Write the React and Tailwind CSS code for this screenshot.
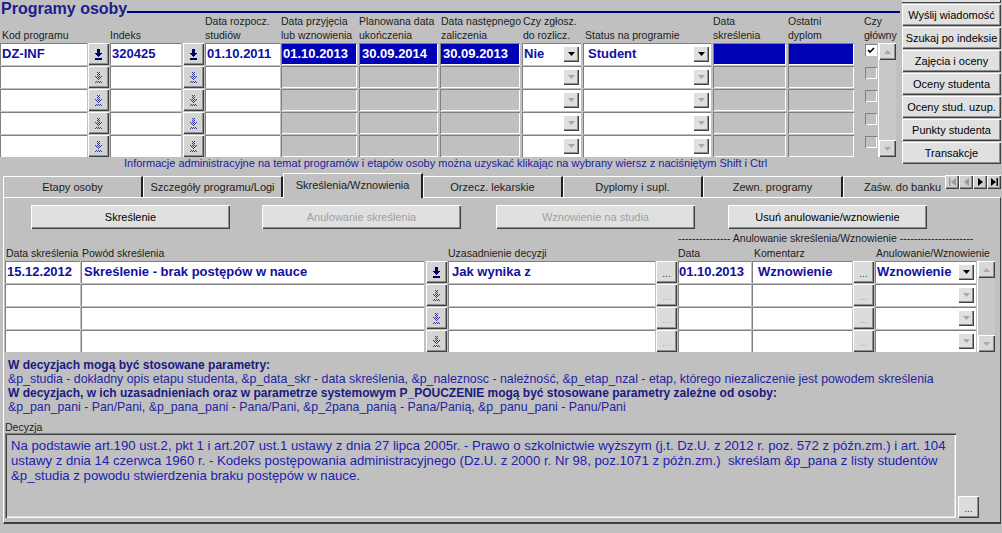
import React from "react";

const raised =
  "shadow-[inset_1px_1px_0_#ffffff,inset_-1px_-1px_0_#404040,inset_-2px_-2px_0_#909090]";
const sunk = "shadow-[inset_1px_1px_0_#808080,inset_-1px_-1px_0_#ffffff]";

const ARROW = [
  "..###..",
  "..###..",
  "..###..",
  "..###..",
  "#######",
  ".#####.",
  "..###..",
  "...#...",
  ".......",
  "#######",
  "#######",
];

function LovIcon({ on }) {
  const px = [];
  ARROW.forEach((row, y) =>
    [...row].forEach((c, x) => {
      if (c === "#" && (on || (x + y) % 2 === 0))
        px.push(<rect key={x + "-" + y} x={x} y={y} width="1" height="1" />);
    })
  );
  return (
    <svg width="7" height="11" viewBox="0 0 7 11" shapeRendering="crispEdges" fill={on ? "#000060" : "#3636a0"}>
      {px}
    </svg>
  );
}

function DropArrow({ on }) {
  return (
    <svg width="7" height="4" viewBox="0 0 7 4">
      <path d="M0 0h7L3.5 4z" fill={on ? "#000000" : "#a8a8a8"} />
    </svg>
  );
}

function ScrollArrow({ up }) {
  return (
    <svg width="7" height="4" viewBox="0 0 7 4">
      <path d={up ? "M0 4h7L3.5 0z" : "M0 0h7L3.5 4z"} fill="#a8a8a8" />
    </svg>
  );
}

function Scrollbar({ cls }) {
  return (
    <div className={`${cls} flex flex-col bg-[#c8c8c8] border-l border-l-white`}>
      <div className={`h-[17px] bg-[#d8d8d8] ${raised} flex items-center justify-center`}>
        <ScrollArrow up />
      </div>
      <div className="flex-1" />
      <div className={`h-[17px] bg-[#d8d8d8] ${raised} flex items-center justify-center`}>
        <ScrollArrow />
      </div>
    </div>
  );
}

function Cell({ c, first }) {
  if (c.kind === "lov")
    return (
      <div className={`${c.cls} h-full bg-[#d4d4d4] ${raised} flex items-center justify-center`}>
        <LovIcon on={first} />
      </div>
    );
  if (c.kind === "dots")
    return (
      <div className={`${c.cls} h-full bg-[#dcdcdc] ${raised} flex items-end justify-center pb-[4px] text-[10px] leading-none ${first ? "text-[#404040]" : "text-[#a8a8a8]"}`}>
        ...
      </div>
    );
  if (c.kind === "combo")
    return (
      <div className={`${c.cls} h-full bg-white ${sunk} flex items-center`}>
        <div className={`flex-1 ${c.pad} text-[13px] font-bold text-[#1010a0] whitespace-nowrap overflow-hidden`}>
          {first ? c.v : ""}
        </div>
        <div className={`w-[16px] h-[16px] mr-[2px] shrink-0 bg-[#e0e0e0] ${raised} flex items-center justify-center`}>
          <DropArrow on={first} />
        </div>
      </div>
    );
  const hl = c.kind === "gray" && first;
  const bg = c.kind === "text" ? "bg-white" : hl ? "bg-[#0000b4]" : "bg-[#c0c0c0]";
  return (
    <div className={`${c.cls} h-full ${bg} ${sunk} flex items-center ${c.pad || ""} text-[13px] font-bold whitespace-nowrap overflow-hidden ${hl ? "text-white" : "text-[#1010a0]"}`}>
      {first ? c.v : ""}
    </div>
  );
}

const topCols = [
  { cls: "w-[87px]", pad: "pl-[2px]", kind: "text", v: "DZ-INF" },
  { cls: "ml-[1px] w-[21px]", kind: "lov" },
  { cls: "ml-[1px] w-[71px]", pad: "pl-[2px]", kind: "text", v: "320425" },
  { cls: "ml-[2px] w-[21px]", kind: "lov" },
  { cls: "ml-[1px] w-[75px]", pad: "pl-[2px]", kind: "text", v: "01.10.2011" },
  { cls: "ml-[1px] w-[76px]", pad: "pl-[2px]", kind: "gray", v: "01.10.2013" },
  { cls: "ml-[2px] w-[79px]", pad: "pl-[3px]", kind: "gray", v: "30.09.2014" },
  { cls: "ml-[2px] w-[80px]", pad: "pl-[3px]", kind: "gray", v: "30.09.2013" },
  { cls: "ml-[2px] w-[59px]", pad: "pl-[2px]", kind: "combo", v: "Nie" },
  { cls: "ml-[2px] w-[128px]", pad: "pl-[5px]", kind: "combo", v: "Student" },
  { cls: "ml-[2px] w-[73px]", kind: "gray", v: "" },
  { cls: "ml-[2px] w-[66px]", kind: "gray", v: "" },
];

const botCols = [
  { cls: "ml-[1px] w-[75px]", pad: "pl-[2px]", kind: "text", v: "15.12.2012" },
  { cls: "ml-[1px] w-[343px]", pad: "pl-[3px]", kind: "text", v: "Skreślenie - brak postępów w nauce" },
  { cls: "ml-[2px] w-[21px]", kind: "lov" },
  { cls: "ml-[1px] w-[207px]", pad: "pl-[4px]", kind: "text", v: "Jak wynika z" },
  { cls: "ml-[1px] w-[21px]", kind: "dots" },
  { cls: "ml-[1px] w-[73px]", pad: "pl-[1px]", kind: "text", v: "01.10.2013" },
  { cls: "ml-[1px] w-[100px]", pad: "pl-[6px]", kind: "text", v: "Wznowienie" },
  { cls: "ml-[1px] w-[21px]", kind: "dots" },
  { cls: "ml-[1px] w-[101px]", pad: "pl-[2px]", kind: "combo", v: "Wznowienie" },
];

const sideButtons = [
  "Wyślij wiadomość",
  "Szukaj po indeksie",
  "Zajęcia i oceny",
  "Oceny studenta",
  "Oceny stud. uzup.",
  "Punkty studenta",
  "Transakcje",
];

const tabs = [
  "Etapy osoby",
  "Szczegóły programu/Logi",
  "Skreślenia/Wznowienia",
  "Orzecz. lekarskie",
  "Dyplomy i supl.",
  "Zewn. programy",
];

function Check() {
  return (
    <svg width="8" height="7" viewBox="0 0 8 7">
      <path d="M1 3l2 2 4-4" stroke="#000" strokeWidth="1.6" fill="none" />
    </svg>
  );
}

function NavIcon({ kind, on }) {
  const f = on ? "#000000" : "#9a9a9a";
  return (
    <svg width="7" height="8" viewBox="0 0 7 8">
      {kind === "first" && (
        <>
          <rect x="0" y="0" width="1.5" height="8" fill={f} />
          <path d="M7 0v8L2 4z" fill={f} />
        </>
      )}
      {kind === "prev" && <path d="M6 0v8L1 4z" fill={f} />}
      {kind === "next" && <path d="M1 0v8l5-4z" fill={f} />}
      {kind === "last" && (
        <>
          <path d="M0 0v8l5-4z" fill={f} />
          <rect x="5.5" y="0" width="1.5" height="8" fill={f} />
        </>
      )}
    </svg>
  );
}

function Head({ cls, l1, l2 }) {
  return (
    <div className={`${cls} shrink-0 flex flex-col justify-end text-[10.5px] leading-[14px] whitespace-nowrap`}>
      {l1 && <div>{l1}</div>}
      <div>{l2}</div>
    </div>
  );
}

export default function App() {
  return (
    <div className="w-[1002px] h-[533px] bg-[#c0c0c0] overflow-hidden font-['Liberation_Sans',Arial,sans-serif] text-[#202020] select-none">
      {/* top part */}
      <div className="flex h-[170px]">
        <div className="w-[900px] flex flex-col">
          <div className="h-[14px] flex items-start">
            <div className="pl-[1px] text-[16px] leading-[18px] font-bold text-[#1c1c8c] whitespace-nowrap">
              Programy osoby
            </div>
            <div className="flex-1 h-[2px] mt-[11px] bg-[#000080]" />
          </div>

          <div className="h-[28px] mb-[1px] flex">
            <Head cls="w-[110px] pl-[2px]" l2="Kod programu" />
            <Head cls="w-[95px]" l2="Indeks" />
            <Head cls="w-[76px]" l1="Data rozpocz." l2="studiów" />
            <Head cls="w-[78px]" l1="Data przyjęcia" l2="lub wznowienia" />
            <Head cls="w-[81px]" l1="Planowana data" l2="ukończenia" />
            <Head cls="w-[82px] pl-[1px]" l1="Data następnego" l2="zaliczenia" />
            <Head cls="w-[61px] pl-[1px]" l1="Czy zgłosz." l2="do rozlicz." />
            <Head cls="w-[130px] pl-[2px]" l2="Status na programie" />
            <Head cls="w-[75px]" l1="Data" l2="skreślenia" />
            <Head cls="w-[74px]" l1="Ostatni" l2="dyplom" />
            <Head cls="w-[40px] pl-[2px]" l1="Czy" l2="główny" />
          </div>

          <div className="flex h-[114px]">
            <div className="flex flex-col gap-[1px]">
              {[0, 1, 2, 3, 4].map((r) => (
                <div key={r} className="flex h-[22px]">
                  {topCols.map((c, i) => (
                    <Cell key={i} c={c} first={r === 0} />
                  ))}
                  <div className={`ml-[11px] w-[12px] h-[12px] mt-[1px] ${sunk} flex items-center justify-center ${r === 0 ? "bg-white" : "bg-[#c0c0c0]"}`}>
                    {r === 0 && <Check />}
                  </div>
                </div>
              ))}
            </div>
            <Scrollbar cls="ml-[1px] w-[18px] h-[114px]" />
          </div>

          <div className="h-[13px] pl-[124px] text-[11px] leading-[13px] text-[#2020a0] whitespace-nowrap">
            Informacje administracyjne na temat programów i etapów osoby można uzyskać klikając na wybrany wiersz z naciśniętym Shift i Ctrl
          </div>
        </div>

        <div className="ml-[2px] w-[99px] flex flex-col">
          <div className="h-[3px] bg-[#e0e0e0] border-b border-b-[#404040] border-r border-r-[#404040]" />
          <div className="mt-[1px] flex flex-col gap-[1px]">
            {sideButtons.map((b) => (
              <div key={b} className={`h-[22px] bg-[#e0e0e0] ${raised} flex items-center justify-center text-[11px] text-black whitespace-nowrap`}>
                {b}
              </div>
            ))}
          </div>
        </div>
      </div>

      {/* tabs */}
      <div className="relative h-[27px] flex items-end pl-[3px]">
        {tabs.map((t, i) =>
          i === 2 ? (
            <div key={t} className="relative z-10 -mb-[1px] w-[140px] h-[25px] bg-[#c0c0c0] border-t border-l border-t-white border-l-white border-r-2 border-r-[#202020] flex items-center justify-center text-[11px] pb-[2px]">
              {t}
            </div>
          ) : (
            <div key={t} className="w-[140px] h-[21px] bg-[#c0c0c0] border-t border-l border-t-white border-l-white border-r-2 border-r-[#202020] flex items-center justify-center text-[11px]">
              {t}
            </div>
          )
        )}
        <div className="w-[140px] h-[21px] bg-[#c0c0c0] border-t border-l border-t-white border-l-white flex items-center pl-[20px] text-[11px] whitespace-nowrap">
          Zaśw. do banku
        </div>
        <div className="absolute right-[1px] top-[5px] z-20 flex bg-[#c0c0c0]">
          {[
            ["first", false],
            ["prev", false],
            ["next", true],
            ["last", true],
          ].map(([k, on]) => (
            <div key={k} className={`w-[14px] h-[14px] bg-[#d0d0d0] ${raised} flex items-center justify-center`}>
              <NavIcon kind={k} on={on} />
            </div>
          ))}
        </div>
      </div>

      {/* tab panel */}
      <div className="ml-[3px] w-[998px] h-[327px] border-t border-l border-t-white border-l-white border-r border-r-[#404040] border-b-2 border-b-[#404040] flex flex-col">
        <div className="mt-[7px] h-[24px] flex text-[11px]">
          <div className={`ml-[27px] w-[199px] bg-[#e0e0e0] ${raised} flex items-center justify-center text-black`}>Skreślenie</div>
          <div className={`ml-[32px] w-[199px] bg-[#e0e0e0] ${raised} flex items-center justify-center text-[#a0a0a0]`}>Anulowanie skreślenia</div>
          <div className={`ml-[35px] w-[199px] bg-[#e0e0e0] ${raised} flex items-center justify-center text-[#a0a0a0]`}>Wznowienie na studia</div>
          <div className={`ml-[33px] w-[199px] bg-[#e0e0e0] ${raised} flex items-center justify-center text-black`}>Usuń anulowanie/wznowienie</div>
        </div>

        <div className="mt-[3px] h-[12px] ml-[674px] text-[10.5px] leading-[12px] whitespace-nowrap">
          --------------- Anulowanie skreślenia/Wznowienie ---------------------
        </div>

        <div className="mt-[2px] h-[14px] flex text-[10.5px] leading-[14px] whitespace-nowrap">
          <div className="ml-[1px] w-[76px] pl-[1px]">Data skreślenia</div>
          <div className="w-[366px] pl-[1px]">Powód skreślenia</div>
          <div className="w-[230px] pl-[1px]">Uzasadnienie decyzji</div>
          <div className="w-[76px] pl-[1px]">Data</div>
          <div className="w-[122px] pl-[1px]">Komentarz</div>
          <div className="pl-[1px]">Anulowanie/Wznowienie</div>
        </div>

        <div className="mt-[1px] flex h-[91px]">
          <div className="flex flex-col gap-[1px]">
            {[0, 1, 2, 3].map((r) => (
              <div key={r} className="flex h-[22px]">
                {botCols.map((c, i) => (
                  <Cell key={i} c={c} first={r === 0} />
                ))}
              </div>
            ))}
          </div>
          <Scrollbar cls="ml-[1px] w-[18px] h-[91px]" />
        </div>

        <div className="mt-[6px] ml-[4px] leading-[14px] whitespace-nowrap">
          <div className="text-[12px] font-bold text-[#1a1a80]">W decyzjach mogą być stosowane parametry:</div>
          <div className="text-[12.35px] text-[#2424a0]">
            &amp;p_studia - dokładny opis etapu studenta, &amp;p_data_skr - data skreślenia, &amp;p_naleznosc - należność, &amp;p_etap_nzal - etap, którego niezaliczenie jest powodem skreślenia
          </div>
          <div className="text-[12px] font-bold text-[#1a1a80]">
            W decyzjach, w ich uzasadnieniach oraz w parametrze systemowym P_POUCZENIE mogą być stosowane parametry zależne od osoby:
          </div>
          <div className="text-[12.35px] text-[#2424a0]">
            &amp;p_pan_pani - Pan/Pani, &amp;p_pana_pani - Pana/Pani, &amp;p_2pana_panią - Pana/Panią, &amp;p_panu_pani - Panu/Pani
          </div>
        </div>

        <div className="mt-[7px] ml-[1px] h-[12px] text-[10.5px] leading-[12px]">Decyzja</div>

        <div className="flex items-end">
          <div className={`ml-[1px] w-[951px] h-[85px] bg-[#c0c0c0] shadow-[inset_1px_1px_0_#808080,inset_2px_2px_0_#404040,inset_-1px_-1px_0_#ffffff,inset_-2px_-2px_0_#dcdcdc] pl-[6px] pt-[5px] text-[13.2px] leading-[15px] text-[#2020b0] whitespace-pre`}>
            <div>Na podstawie art.190 ust.2, pkt 1 i art.207 ust.1 ustawy z dnia 27 lipca 2005r. - Prawo o szkolnictwie wyższym (j.t. Dz.U. z 2012 r. poz. 572 z późn.zm.) i art. 104</div>
            <div>ustawy z dnia 14 czerwca 1960 r. - Kodeks postępowania administracyjnego (Dz.U. z 2000 r. Nr 98, poz.1071 z późn.zm.)  skreślam &amp;p_pana z listy studentów</div>
            <div>&amp;p_studia z powodu stwierdzenia braku postępów w nauce.</div>
          </div>
          <div className={`ml-[2px] w-[21px] h-[22px] bg-[#dcdcdc] ${raised} flex items-end justify-center pb-[4px] text-[10px] leading-none text-[#404040]`}>
            ...
          </div>
        </div>
      </div>
    </div>
  );
}
